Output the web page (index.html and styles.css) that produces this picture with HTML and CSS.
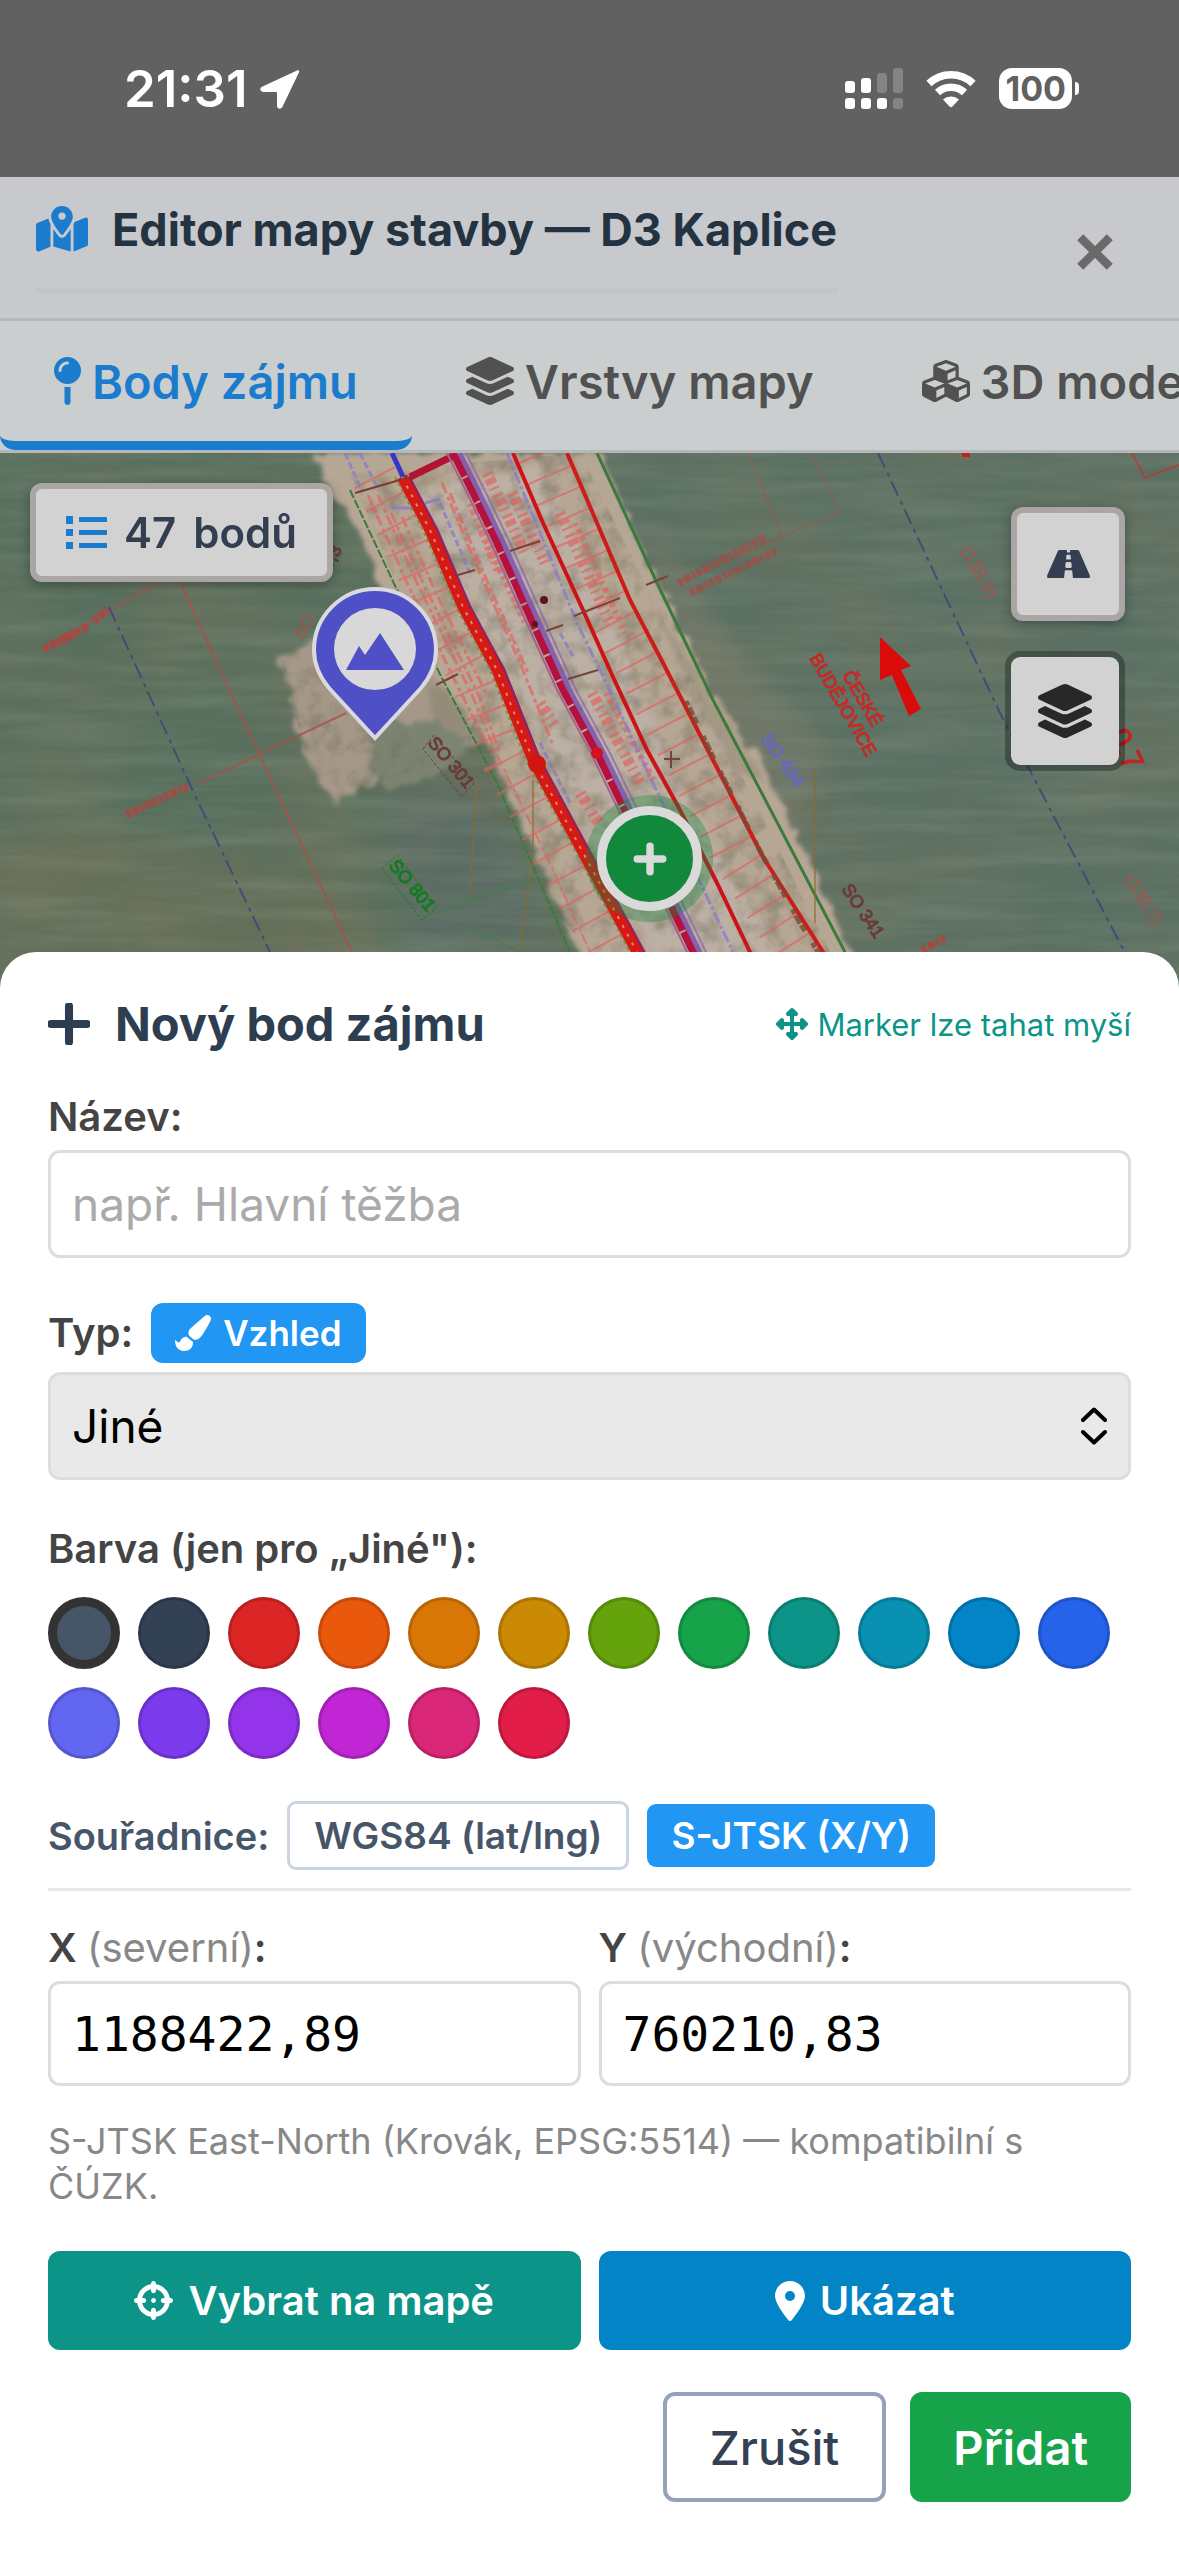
FILE: index.html
```html
<!DOCTYPE html>
<html lang="cs">
<head>
    <meta charset="UTF-8">
    <meta name="viewport" content="width=device-width, initial-scale=1.0">
    <title>Editor mapy stavby — D3 Kaplice</title>
    <link rel="stylesheet" href="styles.css">
</head>
<body>
    <div class="statusbar">
        <div class="statusbar-left">
            <span>21:31</span>
            <svg class="icon-location" viewBox="0 0 40 40"><path d="M37 1.500 2.500 17.500c-3.500 1.700-2.500 5.500 1.200 5.500H16c.7 0 1 .3 1 1v12.500c0 3.700 4 4.500 5.600 1L38.700 4C39.600 1.800 38.800.8 37 1.500z"/></svg>
        </div>
        <div class="statusbar-right">
            <svg class="icon-signal" viewBox="0 0 58 41">
                <g fill="#fff">
                    <rect x="0" y="13" width="10" height="12" rx="3"/><rect x="16" y="10" width="10" height="15" rx="3"/>
                    <rect x="0" y="30" width="10" height="11" rx="3"/><rect x="16" y="30" width="10" height="11" rx="3"/><rect x="32" y="30" width="10" height="11" rx="3"/>
                </g>
                <g fill="#838585">
                    <rect x="32" y="5" width="10" height="20" rx="3"/><rect x="48" y="0" width="10" height="25" rx="3"/><rect x="48" y="30" width="10" height="11" rx="3"/>
                </g>
            </svg>
            <svg class="icon-wifi" viewBox="0 0 52 38">
                <path d="M4 13.500a32 32 0 0 1 44 0M12.500 22.500a20 20 0 0 1 27 0" fill="none" stroke="#fff" stroke-width="7.500"/>
                <path d="M18 29.500a12 12 0 0 1 16 0l-6.500 7q-1.500 1.500-3 0z" fill="#fff"/>
            </svg>
            <div class="battery"><span>100</span></div>
        </div>
    </div>

    <header class="header">
        <h1 class="header-title">
            <svg class="icon" viewBox="0 0 576 512"><path d="M408 120c0 54.600-73.100 151.900-105.200 192c-7.700 9.600-22 9.600-29.600 0C241.100 271.900 168 174.600 168 120C168 53.700 221.700 0 288 0s120 53.700 120 120zm8 80.400c3.500-6.900 6.700-13.800 9.600-20.600c.5-1.200 1-2.500 1.500-3.700l116-46.400C558.900 123.400 576 135 576 152V422.800c0 9.800-6 18.600-15.100 22.300L416 503V200.400zM137.600 138.300c2.400 14.100 7.200 28.300 12.800 41.500c2.900 6.800 6.100 13.700 9.600 20.600V451.800L32.900 502.700C17.100 509 0 497.400 0 480.400V209.600c0-9.800 6-18.600 15.100-22.300l122.600-49zM327.800 332c13.900-17.400 35.700-45.700 56.200-77V504.300L192 449.400V255c20.500 31.300 42.300 59.600 56.200 77c20.500 25.600 59.100 25.600 79.600 0zM288 152a40 40 0 1 0 0-80 40 40 0 1 0 0 80z"/></svg>
            <span>Editor mapy stavby — D3 Kaplice</span>
        </h1>
        <button class="close" type="button" aria-label="Zavřít">
            <svg viewBox="0 0 36 36"><path d="M4 4l28 28M32 4L4 32"/></svg>
        </button>
    </header>

    <nav class="tabs">
        <button class="tab active" type="button">
            <svg class="icon-pin" viewBox="16 0 288 512"><path d="M16 144a144 144 0 1 1 288 0A144 144 0 1 1 16 144zM160 80c8.800 0 16-7.200 16-16s-7.200-16-16-16c-53 0-96 43-96 96c0 8.800 7.200 16 16 16s16-7.200 16-16c0-35.300 28.700-64 64-64zM128 480V317.100c10.400 1.900 21.100 2.900 32 2.900s21.600-1 32-2.900V480c0 17.700-14.300 32-32 32s-32-14.300-32-32z"/></svg>
            Body zájmu
        </button>
        <button class="tab" type="button">
            <svg class="icon-layers" viewBox="32 0 512 512"><use href="#layers"/></svg>
            Vrstvy mapy
        </button>
        <button class="tab" type="button">
            <svg class="icon-layers" viewBox="0 0 512 512"><path d="M488.600 250.200L392 214V105.500c0-15-9.300-28.400-23.400-33.700l-100-37.500c-8.100-3.100-17.100-3.100-25.300 0l-100 37.500c-14.100 5.300-23.400 18.700-23.400 33.700V214l-96.600 36.200C9.300 255.500 0 268.900 0 283.900V394c0 13.600 7.700 26.100 19.900 32.200l100 50c10.100 5.100 22.100 5.100 32.200 0l103.900-52 103.900 52c10.100 5.100 22.100 5.100 32.200 0l100-50c12.200-6.100 19.900-18.600 19.900-32.200V283.900c0-15-9.300-28.400-23.400-33.700zM358 214.800l-85 31.900v-68.200l85-37v73.300zM154 104.100l102-38.200 102 38.200v.6l-102 41.400-102-41.400v-.6zm84 291.100l-85 42.500v-79.100l85-38.800v75.400zm0-112l-102 41.400-102-41.400v-.6l102-38.200 102 38.200v.6zm240 112l-85 42.500v-79.100l85-38.800v75.400zm0-112l-102 41.400-102-41.400v-.6l102-38.200 102 38.200v.6z"/></svg>
            3D modely
        </button>
    </nav>

    <main class="map">
        <svg class="map-canvas" viewBox="0 0 1179 540" preserveAspectRatio="xMinYMin slice">
            <defs>
                <path id="layers" d="M264.500 5.200c14.900-6.900 32.100-6.900 47 0l218.600 101c8.500 3.900 13.900 12.400 13.900 21.800s-5.400 17.900-13.900 21.800l-218.600 101c-14.900 6.900-32.100 6.900-47 0L45.900 149.800C37.400 145.800 32 137.300 32 128s5.400-17.900 13.900-21.800L264.500 5.200zM476.900 209.600l53.200 24.600c8.500 3.900 13.900 12.400 13.900 21.800s-5.400 17.900-13.900 21.800l-218.600 101c-14.900 6.900-32.100 6.900-47 0L45.900 277.800C37.400 273.800 32 265.300 32 256s5.400-17.900 13.900-21.800l53.200-24.600 152 70.200c23.400 10.800 50.400 10.800 73.800 0l152-70.200zm-152 198.200l152-70.200 53.200 24.600c8.500 3.900 13.900 12.400 13.900 21.800s-5.400 17.900-13.900 21.800l-218.600 101c-14.900 6.900-32.100 6.900-47 0L45.900 405.800C37.400 401.800 32 393.300 32 384s5.400-17.900 13.900-21.800l53.200-24.600 152 70.200c23.400 10.800 50.400 10.800 73.800 0z"/>
                <path id="line-a" d="M402 24L430 77 463 154 497 217 533 307 580 394 637 499 660 540"/>
                <path id="line-b" d="M453 0L473 40 497 90 530 164 563 237 597 300 623 354 693 499 713 540"/>
                <path id="line-c" d="M513 0L543 70 583 157 613 224 647 297 680 357 717 430 750 499 770 540"/>
                <path id="line-d" d="M567 0L597 70 630 147 663 210 713 307 763 404 823 499 848 540"/>
                <filter id="grass" x="0" y="0" width="100%" height="100%" color-interpolation-filters="sRGB">
                    <feTurbulence type="fractalNoise" baseFrequency="0.006 0.07" numOctaves="5" seed="7"/>
                    <feColorMatrix values="0 0 0 0 .52  0 0 0 0 .57  0 0 0 0 .5  1.400 0 0 0 -.5"/>
                </filter>
                <filter id="patches" x="0" y="0" width="100%" height="100%" color-interpolation-filters="sRGB">
                    <feTurbulence type="fractalNoise" baseFrequency="0.008" numOctaves="5" seed="12"/>
                    <feColorMatrix values="0 0 0 0 .47  0 0 0 0 .46  0 0 0 0 .36  0 2 0 0 -.75"/>
                </filter>
                <filter id="grain" x="0" y="0" width="100%" height="100%" color-interpolation-filters="sRGB">
                    <feTurbulence type="fractalNoise" baseFrequency="0.05" numOctaves="4" seed="5"/>
                    <feColorMatrix values="0 0 0 0 .4  0 0 0 0 .4  0 0 0 0 .32  0 2.400 0 0 -1" result="g"/>
                    <feComposite in="g" in2="SourceGraphic" operator="in"/>
                </filter>
                <filter id="rough" x="-5%" y="-5%" width="110%" height="110%">
                    <feTurbulence type="fractalNoise" baseFrequency="0.06" numOctaves="4" seed="3" result="n"/>
                    <feDisplacementMap in="SourceGraphic" in2="n" scale="18" xChannelSelector="R" yChannelSelector="G" result="d"/>
                    <feGaussianBlur in="d" stdDeviation="2"/>
                </filter>
                <filter id="soft" x="-20%" y="-20%" width="140%" height="140%"><feGaussianBlur stdDeviation="10"/></filter>
            </defs>

            <!-- fields -->
            <rect width="1179" height="540" fill="#586f5d"/>
            <path d="M600 0H1179V540H850z" fill="#5a7063"/>
            <path d="M640 60C700 140 740 220 830 290L790 400 700 260z" fill="#7c7b6c" opacity=".6" filter="url(#soft)"/>
            <path d="M0 400C120 350 260 400 380 470V540H0z" fill="#687059" opacity=".7" filter="url(#soft)"/>
            <path d="M380 330L480 320 560 499H420z" fill="#5c6c66" opacity=".8" filter="url(#soft)"/>
            <rect width="1179" height="540" filter="url(#patches)" opacity=".45"/>
            <rect width="1179" height="540" filter="url(#grass)" opacity=".5"/>

            <!-- bare soil -->
            <g filter="url(#rough)">
                <path d="M322 180L280 205 292 250 305 300 325 340 337 352 370 332 410 285 480 290 470 220 400 140z" fill="#a69889"/>
                <path d="M372 270L475 265 465 300 430 328 385 335 365 310z" fill="#7c8471"/>
                <path d="M425 232L480 240 480 290 440 275z" fill="#948c79"/>
                <path d="M310 0L350 66 375 115 395 190 443 227 485 287 512 347 540 414 580 499 600 540H880L850 497 770 324 719 247 655 127 600 0z" fill="#b6a694"/>
                <path d="M420 40L490 190 560 320 650 499 690 540H800L680 330 590 120 540 10z" fill="#bcafa3"/>
                <path d="M650 140L720 255 765 330 740 320 690 240z" fill="#a39883"/>
            </g>
            <path d="M322 180L280 205 292 250 305 300 325 340 337 352 370 332 465 300 480 240 400 140 350 20 580 0 830 499H590z" filter="url(#grain)" opacity=".45"/>

            <!-- field boundaries and setting-out lines -->
            <g fill="none" stroke="#a8514a" stroke-width="2" opacity=".8">
                <path d="M180 129L258 299 352 499 372 540M199 330L346 260M42 197L157 130"/>
                <path d="M748 0L782 82M811 0L840 59 786 82 679 130" opacity=".5"/>
                <path d="M1132 0L1145 25 1179 12" stroke="#b83a36"/>
            </g>
            <g fill="none" stroke="#434c76" stroke-width="2" stroke-dasharray="16 6 4 5">
                <path d="M109 154L191 334 270 499 290 540"/>
                <path d="M878 0L1000 260 1122 494 1145 540"/>
            </g>
            <g fill="none" stroke="#3c7a3c" stroke-width="2">
                <path d="M350 37L397 137 443 227 497 330 570 499 592 540" stroke-dasharray="9 2"/>
                <path d="M597 0L657 130 713 247 845 499 868 540" stroke-width="3"/>
            </g>
            <path d="M533 327V400L520 499M477 327L470 440M815 320V470" fill="none" stroke="#8b6a2f" stroke-width="2" opacity=".6"/>
            <path d="M430 462L530 428M460 470L520 499" fill="none" stroke="#3f8045" stroke-width="2" opacity=".6"/>

            <!-- earthwork hatching -->
            <g fill="none" stroke="#e2605c" opacity=".65">
                <g stroke-width="3" stroke-dasharray="11 4 4 3">
                    <path d="M368 42L408 132 462 242 492 302"/><path d="M378 42L418 132 472 242 497 302"/>
                    <path d="M391 60L424 132 480 245 500 300"/><path d="M402 64L437 142 486 240"/>
                    <path d="M442 30L480 120 520 210 552 290"/><path d="M450 40L488 130 528 220"/>
                    <path d="M497 302L545 400 590 499" stroke-width="2"/>
                </g>
                <use href="#line-d" x="-27" stroke-width="46" stroke-dasharray="2 21"/>
                <use href="#line-a" x="-28" stroke-width="46" stroke-dasharray="2 24"/>
                <g stroke-width="11" stroke-dasharray="3 3 6 4 2 5">
                    <path d="M487 20L525 100"/><path d="M472 50L500 120"/><path d="M560 60L610 170"/><path d="M592 240L640 330"/><path d="M512 40L545 110"/>
                    <path d="M540 250L556 274"/>
                    <path d="M580 340L600 372"/>
                </g>
                <g stroke-width="6" stroke-dasharray="3 4 5 4">
                    <path d="M575 70L625 180"/><path d="M482 80L525 170"/><path d="M606 240L655 330"/>
                </g>
            </g>
            <g fill="none" stroke="#8278cf" stroke-width="3" opacity=".7">
                <path d="M507 0L543 87 577 170 613 244 650 324 733 499" stroke-dasharray="12 3 3 3"/>
                <path d="M345 0L362 38M360 0L378 36M392 0L402 24M440 50L470 120M560 180L573 203M540 290L570 350" stroke-dasharray="7 3"/>
                <path d="M425 50L440 46M392 55H412"/>
            </g>
            <path d="M392 0L404 26" stroke="#3636c9" stroke-width="5"/>

            <!-- carriageways -->
            <g fill="none">
                <use href="#line-a" x="7" stroke="#8e2467" stroke-width="3"/>
                <use href="#line-a" stroke="#d61a13" stroke-width="11"/>
                <use href="#line-a" stroke="#dd8a7c" stroke-width="2" stroke-dasharray="3 7"/>
                <use href="#line-a" x="-7" stroke="#7d8a3f" stroke-width="2" stroke-dasharray="3 4"/>
                <path d="M410 24L453 3" stroke="#b01432" stroke-width="7"/>
                <path d="M355 40L410 24" stroke="#7b3c33" stroke-width="2"/>
                <use href="#line-b" x="6" stroke="#7a4fb4" stroke-width="6" opacity=".8"/>
                <use href="#line-b" x="-6" stroke="#a4638c" stroke-width="2"/>
                <use href="#line-b" x="13" stroke="#8b62b0" stroke-width="2" opacity=".7"/>
                <use href="#line-b" stroke="#b4123c" stroke-width="7" stroke-dasharray="26 2"/>
                <use href="#line-c" stroke="#cc1318" stroke-width="4"/>
                <use href="#line-d" stroke="#cc1d1a" stroke-width="4"/>
                <path d="M686 248L720 318 760 398 800 470 825 510" stroke="#7b4a35" stroke-width="5" stroke-dasharray="5 2 9 2 7 14" opacity=".8"/>
                <path d="M458 122L475 117M510 98L540 88M574 163L620 145M546 178L563 172M568 226L598 217M436 232L458 221M646 132L668 123M664 306H680M671 298V315" stroke="#75433a" stroke-width="2"/>
            </g>
            <circle cx="544" cy="147" r="4" fill="#5b1420"/>
            <circle cx="535" cy="171" r="3" fill="#5b1420"/>
            <circle cx="597" cy="300" r="6" fill="#d3121f"/>
            <circle cx="537" cy="311" r="9" fill="#d0160f"/>
            <rect x="962" y="0" width="8" height="4" fill="#c8201d"/>

            <!-- illegible chainage notes -->
            <g fill="none" stroke="#b6413c" stroke-width="8" stroke-dasharray="5 2 7 2 3 2" opacity=".75">
                <path d="M44 196L78 178M58 190L88 173M94 168L108 156M126 362L188 333"/>
                <path d="M678 130L766 84M690 140L776 98" opacity=".75"/>
                <path d="M922 497L945 485"/>
            </g>

            <g class="map-text">
                <g fill="#6b3a38" stroke="#6b3a38">
                    <text transform="translate(427 290) rotate(50)">SO 301</text>
                    <text transform="translate(841 436) rotate(56)">SO 341</text>
                    <text transform="translate(330 118) rotate(-60)">0,3</text>
                </g>
                <path d="M423 296L434 282 474 330 462 344z" fill="none" stroke="#6b3a38" stroke-dasharray="3 2"/>
                <text transform="translate(388 413) rotate(50)" fill="#147a22" stroke="#147a22">SO 801</text>
                <path d="M382 416L397 402 437 454 422 467z" fill="none" stroke="#147a22" stroke-dasharray="3 2"/>
                <text transform="translate(760 286) rotate(54)" fill="#6668c0" stroke="#6668c0">SO 434</text>
                <g fill="#c42a26" stroke="#c42a26">
                    <text transform="translate(842 222) rotate(60)">ČESKÉ</text>
                    <text transform="translate(809 205) rotate(60)">BUDĚJOVICE</text>
                </g>
                <g fill="#a8514a">
                    <text transform="translate(960 97) rotate(60)">(139,6)</text>
                    <text transform="translate(1124 425) rotate(60)">(139,7)</text>
                    <text transform="translate(302 188) rotate(-58)">SO</text>
                </g>
                <text class="map-km" transform="translate(1108 282) rotate(64)" fill="#c8201d" stroke="#c8201d">0,7</text>
            </g>
            <path d="M880 184L911 213 901 217 921 256 909 263 892 222 880 227z" fill="#d90b0b"/>
        </svg>

        <button class="list-toggle" type="button">
            <svg viewBox="0 0 41 33"><path d="M1 0h6v8H1q-1 0-1-1V1q0-1 1-1zM0 13h7v7H0zM0 26h7v7H0zM13 1h27q1 0 1 1v4H13zM13 14h28v5H13zM13 27h28v5H13z"/></svg>
            <span>47</span><span>bodů</span>
        </button>

        <div class="map-tools">
            <button class="map-tool" type="button" aria-label="Komunikace">
                <svg class="icon-road" viewBox="0 64 576 384"><path d="M573.190 402.670l-139.790-320C428.430 71.290 417.600 64 405.680 64h-97.590l2.450 23.160c.5 4.720-3.210 8.840-7.960 8.840h-29.160c-4.750 0-8.460-4.120-7.960-8.840L267.910 64h-97.590c-11.930 0-22.760 7.290-27.730 18.670L2.800 402.670C-6.450 423.860 8.310 448 30.540 448h196.840l10.310-97.680c.86-8.140 7.720-14.320 15.910-14.320h68.800c8.190 0 15.050 6.180 15.910 14.320L348.620 448h196.840c22.230 0 36.990-24.140 27.730-45.330zM260.400 135.160a8 8 0 0 1 7.960-7.160h39.290c4.090 0 7.530 3.090 7.960 7.160l4.600 43.580c.75 7.090-4.810 13.260-11.930 13.260h-40.540c-7.130 0-12.680-6.170-11.930-13.260l4.590-43.580zM315.640 304h-55.290c-9.500 0-16.910-8.230-15.910-17.680l5.070-48c.86-8.140 7.720-14.320 15.910-14.320h45.150c8.190 0 15.050 6.180 15.910 14.320l5.070 48c1 9.450-6.410 17.680-15.910 17.680z"/></svg>
            </button>
            <button class="map-tool map-tool-layers" type="button" aria-label="Vrstvy">
                <svg viewBox="32 0 512 512"><use href="#layers"/></svg>
            </button>
        </div>

        <button class="marker marker-poi" type="button" aria-label="Bod zájmu">
            <svg viewBox="0 0 126 154">
                <path d="M63 151L17 101C6 88 2 76 2 63a61 61 0 0 1 122 0c0 13-4 25-15 38z" fill="#4f50c6" stroke="#d9d9de" stroke-width="4"/>
                <circle cx="63" cy="62" r="41" fill="#d8d8d8"/>
                <path d="M34 83L47 59 53 68 68 46 92 83z" fill="#4f50c6"/>
            </svg>
        </button>
        <button class="marker marker-new" type="button" aria-label="Nový bod">
            <svg viewBox="0 0 32 32"><path d="M16 4v24M4 16h24"/></svg>
        </button>
    </main>

    <form class="sheet">
        <div class="sheet-head">
            <h2>
                <svg viewBox="16 48 416 416"><path d="M256 80c0-17.700-14.300-32-32-32s-32 14.300-32 32V224H48c-17.700 0-32 14.300-32 32s14.300 32 32 32H192V432c0 17.700 14.300 32 32 32s32-14.300 32-32V288H400c17.700 0 32-14.300 32-32s-14.300-32-32-32H256V80z"/></svg>
                Nový bod zájmu
            </h2>
            <span class="drag-hint">
                <svg viewBox="0 0 512 512"><path d="M278.600 9.400c-12.500-12.500-32.800-12.500-45.300 0l-64 64c-9.200 9.200-11.900 22.900-6.900 34.900s16.600 19.800 29.600 19.800h32v96H128V192c0-12.900-7.800-24.600-19.800-29.600s-25.700-2.200-34.900 6.900l-64 64c-12.500 12.500-12.500 32.800 0 45.300l64 64c9.200 9.200 22.900 11.900 34.900 6.900s19.800-16.600 19.800-29.600V288h96v96H192c-12.900 0-24.600 7.800-29.600 19.800s-2.200 25.700 6.900 34.900l64 64c12.500 12.500 32.800 12.500 45.300 0l64-64c9.200-9.200 11.900-22.900 6.900-34.900s-16.600-19.800-29.600-19.800H288V288h96v32c0 12.900 7.800 24.600 19.800 29.600s25.700 2.200 34.900-6.900l64-64c12.500-12.500 12.500-32.800 0-45.300l-64-64c-9.200-9.200-22.900-11.900-34.900-6.900s-19.800 16.600-19.800 29.600v32H288V128h32c12.900 0 24.600-7.800 29.600-19.800s2.200-25.700-6.900-34.900l-64-64z"/></svg>
                Marker lze tahat myší
            </span>
        </div>

        <div class="field">
            <label for="name">Název:</label>
            <input class="control" id="name" type="text" placeholder="např. Hlavní těžba">
        </div>

        <div class="field">
            <div class="field-row">
                <label for="type">Typ:</label>
                <button class="btn-look" type="button">
                    <svg viewBox="0 0 512 512"><path d="M167.020 309.340c-40.120 2.580-76.530 17.860-97.190 72.300-2.350 6.210-8 9.980-14.590 9.980-11.110 0-45.460-27.670-55.250-34.350C0 439.620 37.930 512 128 512c75.860 0 128-43.770 128-120.190 0-3.110-.65-6.080-.97-9.130l-88.010-73.340zM457.890 0c-15.160 0-29.370 6.710-40.210 16.450C213.270 199.050 192 203.340 192 257.090c0 13.700 3.250 26.760 8.730 38.700l63.820 53.180c7.210 1.800 14.640 3.030 22.390 3.030 62.110 0 98.110-45.470 211.160-256.460 7.380-14.350 13.900-29.850 13.900-45.990C512 20.640 486 0 457.890 0z"/></svg>
                    Vzhled
                </button>
            </div>
            <div class="select-wrap">
                <select class="control" id="type">
                    <option>Jiné</option>
                </select>
                <svg class="select-arrows" viewBox="0 0 26 38"><path d="M2 13L13 2.500 24 13M2 25l11 10.500L24 25"/></svg>
            </div>
        </div>

        <fieldset class="colors">
            <legend>Barva (jen pro „Jiné"):</legend>
            <div class="swatches">
                <input class="swatch slate" type="radio" name="color" aria-label="Břidlicová" checked>
                <input class="swatch slate-dark" type="radio" name="color" aria-label="Tmavě břidlicová">
                <input class="swatch red" type="radio" name="color" aria-label="Červená">
                <input class="swatch orange" type="radio" name="color" aria-label="Oranžová">
                <input class="swatch amber" type="radio" name="color" aria-label="Jantarová">
                <input class="swatch yellow" type="radio" name="color" aria-label="Žlutá">
                <input class="swatch lime" type="radio" name="color" aria-label="Limetková">
                <input class="swatch green" type="radio" name="color" aria-label="Zelená">
                <input class="swatch teal" type="radio" name="color" aria-label="Modrozelená">
                <input class="swatch cyan" type="radio" name="color" aria-label="Azurová">
                <input class="swatch sky" type="radio" name="color" aria-label="Nebeská">
                <input class="swatch blue" type="radio" name="color" aria-label="Modrá">
                <input class="swatch indigo" type="radio" name="color" aria-label="Indigová">
                <input class="swatch violet" type="radio" name="color" aria-label="Fialová">
                <input class="swatch purple" type="radio" name="color" aria-label="Purpurová">
                <input class="swatch fuchsia" type="radio" name="color" aria-label="Fuchsiová">
                <input class="swatch pink" type="radio" name="color" aria-label="Růžová">
                <input class="swatch rose" type="radio" name="color" aria-label="Malinová">
            </div>
        </fieldset>

        <div class="coords-switch">
            <span>Souřadnice:</span>
            <button class="chip" type="button">WGS84 (lat/lng)</button>
            <button class="chip chip-active" type="button">S-JTSK (X/Y)</button>
        </div>

        <div class="two-cols">
            <div class="field">
                <label for="coord-x">X <small>(severní)</small>:</label>
                <input class="control mono" id="coord-x" type="text" value="1188422,89">
            </div>
            <div class="field">
                <label for="coord-y">Y <small>(východní)</small>:</label>
                <input class="control mono" id="coord-y" type="text" value="760210,83">
            </div>
        </div>

        <p class="note">S-JTSK East-North (Krovák, EPSG:5514) — kompatibilní s ČÚZK.</p>

        <div class="two-cols pick">
            <button class="btn btn-pick" type="button">
                <svg class="icon-cross" viewBox="0 0 512 512"><path d="M256 0c17.700 0 32 14.300 32 32V42.400c93.700 13.900 167.700 88 181.600 181.600H480c17.700 0 32 14.300 32 32s-14.300 32-32 32H469.600c-13.900 93.700-88 167.700-181.600 181.600V480c0 17.700-14.300 32-32 32s-32-14.300-32-32V469.600C130.300 455.700 56.300 381.700 42.400 288H32c-17.700 0-32-14.300-32-32s14.300-32 32-32H42.400C56.300 130.300 130.300 56.300 224 42.400V32c0-17.700 14.300-32 32-32zM107.400 288c12.500 58.300 58.400 104.100 116.600 116.600V384c0-17.700 14.300-32 32-32s32 14.300 32 32v20.600c58.300-12.500 104.100-58.400 116.600-116.600H384c-17.700 0-32-14.300-32-32s14.300-32 32-32h20.600C392.100 165.700 346.300 119.900 288 107.400V128c0 17.700-14.300 32-32 32s-32-14.300-32-32V107.400C165.700 119.900 119.900 165.700 107.400 224H128c17.700 0 32 14.300 32 32s-14.300 32-32 32H107.400zM256 224a32 32 0 1 1 0 64 32 32 0 1 1 0-64z"/></svg>
                Vybrat na mapě
            </button>
            <button class="btn btn-show" type="button">
                <svg class="icon-dot" viewBox="0 0 384 512"><path d="M215.700 499.200C267 435 384 279.400 384 192C384 86 298 0 192 0S0 86 0 192c0 87.400 117 243 168.300 307.200c12.300 15.300 35.100 15.300 47.400 0zM192 128a64 64 0 1 1 0 128 64 64 0 1 1 0-128z"/></svg>
                Ukázat
            </button>
        </div>

        <div class="actions">
            <button class="btn-cancel" type="button">Zrušit</button>
            <button class="btn-add" type="submit">Přidat</button>
        </div>
    </form>
</body>
</html>
```
FILE: styles.css
```css
* {
    box-sizing: border-box;
}
body {
    margin: 0;
    min-height: 100vh;
    display: flex;
    flex-direction: column;
    font-family: Inter, "Liberation Sans", sans-serif;
    background: #fff;
}
button, input, select {
    font-family: inherit;
    margin: 0;
}
button {
    border: 0;
    padding: 0;
    cursor: pointer;
}
svg {
    display: block;
    flex-shrink: 0;
    fill: currentColor;
}

/* status bar */
.statusbar {
    display: flex;
    justify-content: space-between;
    align-items: center;
    height: 177px;
    padding: 0 107px 0 124px;
    background: #616161;
    color: #fff;
}
.statusbar-left {
    display: flex;
    align-items: center;
    gap: 12px;
    font-size: 51px;
    font-weight: 600;
}
.icon-location {
    width: 40px;
}
.statusbar-right {
    display: flex;
    align-items: center;
    gap: 22px;
}
.icon-signal {
    width: 58px;
}
.icon-wifi {
    width: 52px;
}
.battery {
    position: relative;
    padding: 0 6px;
    border-radius: 13px;
    background: #fff;
    color: #616161;
    font-size: 34px;
    font-weight: 700;
    line-height: 41px;
}
.battery::after {
    content: "";
    position: absolute;
    top: 14px;
    right: -7px;
    width: 4px;
    height: 13px;
    border-radius: 0 4px 4px 0;
    background: #fff;
}

/* header */
.header {
    display: flex;
    justify-content: space-between;
    align-items: center;
    padding: 24px 36px;
    background: #c7c9cc;
    border-bottom: 3px solid #b3b8bc;
}
.header-title {
    display: flex;
    align-items: center;
    gap: 24px;
    margin: 0;
    padding-bottom: 30px;
    border-bottom: 6px solid #c3c4c5;
    color: #233342;
    font-size: 45px;
    font-weight: 700;
    line-height: 57px;
}
.header-title .icon {
    width: 52px;
    color: #1b7bcc;
}
.close {
    display: flex;
    justify-content: center;
    align-items: center;
    width: 96px;
    height: 90px;
    padding-top: 9px;
    background: none;
}
.close svg {
    width: 38px;
    fill: none;
    stroke: #6a6a6a;
    stroke-width: 8;
}

/* tabs */
.tabs {
    display: flex;
    overflow: hidden;
    background: #cbcecf;
    border-bottom: 3px solid #b4b8bb;
}
.tab {
    display: flex;
    flex-shrink: 0;
    align-items: center;
    gap: 11px;
    height: 129px;
    padding: 0 54px;
    border-bottom: 9px solid transparent;
    border-radius: 15px;
    background: none;
    color: #515151;
    font-size: 47px;
    font-weight: 600;
    white-space: nowrap;
}
.tab.active {
    border-bottom-color: #1b7bcc;
    color: #1b7bcc;
}
.icon-pin {
    width: 27px;
}
.icon-layers {
    width: 48px;
}

/* map */
.map {
    position: relative;
    flex: 1;
    min-height: 420px;
    overflow: hidden;
    background: #5b7160;
}
.map-canvas {
    position: absolute;
    top: 0;
    left: 0;
    width: 100%;
    height: 100%;
}
.map-text {
    font-family: "Liberation Sans", sans-serif;
    font-size: 18px;
}
.map-km {
    font-size: 30px;
}
.list-toggle {
    position: absolute;
    top: 30px;
    left: 30px;
    display: flex;
    align-items: center;
    gap: 17px;
    height: 99px;
    padding: 0 30px;
    border: 6px solid #a9a6a5;
    border-radius: 12px;
    background: #d2d2d2;
    box-shadow: 0 3px 12px rgba(0, 0, 0, .3);
    color: #333f50;
    font-size: 42px;
    font-weight: 600;
}
.list-toggle svg {
    width: 41px;
    color: #1b7bcc;
}
.map-tools {
    position: absolute;
    top: 54px;
    right: 54px;
    display: flex;
    flex-direction: column;
    align-items: flex-end;
    gap: 30px;
}
.map-tool {
    display: flex;
    justify-content: center;
    align-items: center;
    width: 114px;
    height: 114px;
    border: 6px solid #a9a6a5;
    border-radius: 12px;
    background: #d2d2d2;
    box-shadow: 0 3px 12px rgba(0, 0, 0, .3);
    color: #333f50;
}
.map-tool svg {
    width: 54px;
}
.map-tool .icon-road {
    width: 43px;
}
.map-tool-layers {
    width: 120px;
    height: 120px;
    border-color: rgba(0, 0, 0, .3);
    border-radius: 15px;
    background-clip: padding-box;
    box-shadow: none;
    color: #282828;
}
.marker {
    position: absolute;
}
.marker-poi {
    top: 134px;
    left: 312px;
    width: 126px;
    background: none;
}
.marker-new {
    top: 353px;
    left: 597px;
    display: flex;
    justify-content: center;
    align-items: center;
    width: 105px;
    height: 105px;
    border: 9px solid #d9dad9;
    border-radius: 50%;
    background: #12883c;
    box-shadow: 0 0 0 11px rgba(20, 136, 60, .35);
}
.marker-new svg {
    width: 34px;
    stroke: #d9dad9;
    stroke-width: 7;
    stroke-linecap: round;
}

/* bottom sheet */
.sheet {
    position: relative;
    margin-top: -36px;
    padding: 48px 48px 54px;
    border-radius: 36px 36px 0 0;
    background: #fff;
}
.sheet-head {
    display: flex;
    justify-content: space-between;
    align-items: center;
    margin-bottom: 45px;
}
.sheet-head h2 {
    display: flex;
    align-items: center;
    gap: 25px;
    margin: 0;
    color: #2c3e50;
    font-size: 47px;
    font-weight: 700;
    line-height: 48px;
}
.sheet-head h2 svg {
    width: 42px;
    stroke: currentColor;
    stroke-width: 16;
}
.drag-hint {
    display: flex;
    align-items: center;
    gap: 9px;
    color: #0d9488;
    font-size: 31px;
}
.drag-hint svg {
    width: 32px;
}
.field {
    display: flex;
    flex-direction: column;
    gap: 9px;
    margin-bottom: 45px;
}
.field-row {
    display: flex;
    align-items: center;
    gap: 18px;
}
.field label,
.colors legend {
    color: #444;
    font-size: 40px;
    font-weight: 600;
    line-height: 48px;
}
.field label small {
    color: #888;
    font-size: inherit;
    font-weight: 400;
}
.control {
    display: block;
    width: 100%;
    height: 108px;
    padding: 0 21px;
    border: 3px solid #ddd;
    border-radius: 12px;
    background: #fff;
    color: #000;
    font-size: 46px;
}
.control::placeholder {
    color: #aaa;
}
.control.mono {
    height: 105px;
    font-family: "DejaVu Sans Mono", "Liberation Mono", monospace;
    font-size: 48px;
}
.select-wrap {
    position: relative;
}
select.control {
    appearance: none;
    background: #e9e9e9;
}
.select-arrows {
    position: absolute;
    top: 35px;
    right: 24px;
    width: 26px;
    fill: none;
    stroke: #000;
    stroke-width: 4;
    stroke-linecap: round;
    stroke-linejoin: round;
    pointer-events: none;
}
.btn-look {
    display: flex;
    align-items: center;
    gap: 12px;
    height: 60px;
    padding: 0 24px;
    border-radius: 12px;
    background: #2196f3;
    color: #fff;
    font-size: 35px;
    font-weight: 600;
}
.btn-look svg {
    width: 36px;
}

/* colour picker */
.colors {
    margin: 0 0 42px;
    padding: 0;
    border: 0;
}
.colors legend {
    padding: 0;
    margin-bottom: 24px;
}
.swatches {
    display: flex;
    flex-wrap: wrap;
    gap: 18px;
}
.swatch {
    appearance: none;
    width: 72px;
    height: 72px;
    border: 3px solid rgba(0, 0, 0, .15);
    border-radius: 50%;
}
.swatch:checked {
    border: 9px solid #333;
}
.slate { background: #475569; }
.slate-dark { background: #334155; }
.red { background: #dc2626; }
.orange { background: #ea580c; }
.amber { background: #d97706; }
.yellow { background: #ca8a04; }
.lime { background: #65a30d; }
.green { background: #16a34a; }
.teal { background: #0d9488; }
.cyan { background: #0891b2; }
.sky { background: #0284c7; }
.blue { background: #2563eb; }
.indigo { background: #6366f1; }
.violet { background: #7c3aed; }
.purple { background: #9333ea; }
.fuchsia { background: #c026d3; }
.pink { background: #db2777; }
.rose { background: #e11d48; }

/* coordinates */
.coords-switch {
    display: flex;
    align-items: center;
    gap: 18px;
    margin-bottom: 33px;
    padding-bottom: 18px;
    border-bottom: 3px solid #e5e8ee;
    color: #475569;
    font-size: 38px;
    font-weight: 600;
}
.chip {
    height: 69px;
    padding: 0 24px;
    border: 3px solid #cbd5e1;
    border-radius: 9px;
    background: #fff;
    color: #475569;
    font-size: 37px;
    font-weight: 600;
}
.chip-active {
    height: 63px;
    border: 0;
    background: #2196f3;
    color: #fff;
}
.two-cols {
    display: grid;
    grid-template-columns: 1fr 1fr;
    gap: 18px;
}
.two-cols .field {
    margin-bottom: 33px;
}
.note {
    margin: 0 0 42px;
    color: #888;
    font-size: 36px;
    line-height: 45px;
}
.pick {
    margin-bottom: 42px;
}
.btn {
    display: flex;
    justify-content: center;
    align-items: center;
    gap: 15px;
    height: 99px;
    border-radius: 12px;
    color: #fff;
    font-size: 40px;
    font-weight: 600;
}
.btn-pick {
    background: #0d9488;
}
.btn-show {
    background: #0284c7;
}
.icon-cross {
    width: 39px;
}
.icon-dot {
    width: 30px;
}
.actions {
    display: flex;
    justify-content: flex-end;
    gap: 24px;
}
.btn-cancel,
.btn-add {
    height: 110px;
    padding: 0 43px;
    border: 4px solid #94a3b8;
    border-radius: 12px;
    background: #fff;
    color: #334155;
    font-size: 47px;
    font-weight: 500;
}
.btn-add {
    border: 0;
    background: #16a34a;
    color: #fff;
    font-weight: 600;
}
```
